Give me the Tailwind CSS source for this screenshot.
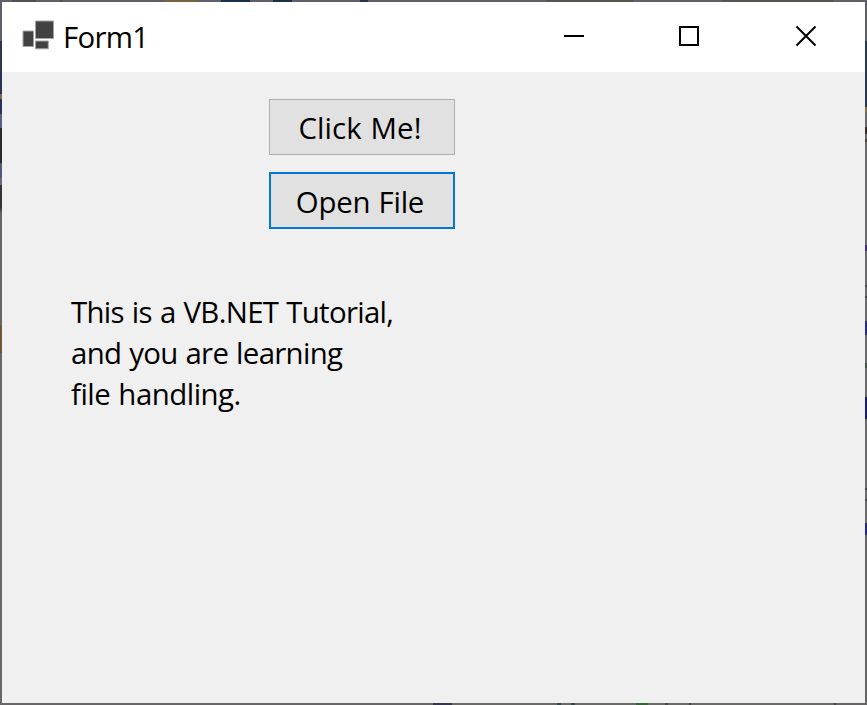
<!DOCTYPE html>
<html lang="en">
<head>
<meta charset="utf-8">
<title>Form1</title>
<script src="https://cdn.jsdelivr.net/npm/@tailwindcss/browser@4"></script>
</head>
<body class="w-[867px] h-[705px] overflow-hidden text-black font-['Open_Sans',sans-serif] text-[29.4px]">
<div class="grid grid-cols-[2px_863px_2px] grid-rows-[2px_701px_2px] w-[867px] h-[705px]">
  <div class="col-span-3 bg-[linear-gradient(90deg,#5f5f69_12px,#4d5153_12px_36px,#5f5f69_36px_60px,#505057_60px_62px,#5f5f69_62px_165px,#79613f_165px_198px,#5f5f69_198px_221px,#19304d_221px_250px,#5f5f69_250px_273px,#19304d_273px_292px,#5f5f69_292px_360px,#24354d_360px_368px,#5f5f69_368px_547px,#57554f_547px_633px,#5f5f69_633px_723px,#57554f_723px_833px,#5f5f69_833px)]"></div>
  <div class="bg-[linear-gradient(180deg,#5f5f69_39px,#2a3450_39px_92px,#80644a_92px_97px,#24325c_97px_112px,#5a607c_112px_126px,#292929_126px_161px,#505876_161px_176px,#6a6a70_176px_183px,#343436_183px_205px,#666_212px_323px,#6f5638_323px_351px,#686868_351px)]"></div>
  <main class="flex flex-col bg-[#f0f0f0]">
    <header class="flex h-[70px] shrink-0 bg-white">
      <div class="flex flex-1 items-start pl-5 pt-[17px]">
        <svg class="w-[34px] h-[32px]" viewBox="0 0 34 32" fill="#424242" stroke="#a4a4a4" stroke-width="1"><path d="M13.5 2h18v17.5h-18zM1 12h10.5v15.5H1zM13.5 22h12.8v7.8h-12.8z"/></svg>
        <h1 class="ml-[7px] -mt-[2px] leading-[40px] tracking-[-0.7px] whitespace-nowrap">Form1</h1>
      </div>
      <svg class="w-[350px] h-[70px]" viewBox="513 0 350 70" fill="none" stroke="#000" stroke-width="2"><path shape-rendering="crispEdges" d="M562 34h20M678 25h18v18h-18z"/><path d="M794.5 24.5l19 19m0-19l-19 19"/></svg>
    </header>
    <div class="flex flex-col gap-[17px] pl-[267px] pt-[27px]">
      <button class="flex w-[186px] h-[56px] justify-center border border-[#adadad] bg-[#e1e1e1] pt-[8px] pr-[4px] leading-[40px] tracking-[0.1px] [word-spacing:1px] whitespace-nowrap">Click Me!</button>
      <button class="flex w-[186px] h-[57px] justify-center border-2 border-[#0078d7] bg-[#e1e1e1] pt-[8px] pr-[4px] leading-[40px] tracking-[-0.25px] [word-spacing:1px] whitespace-nowrap">Open File</button>
    </div>
    <div class="flex flex-col items-start pl-[69px] pt-[63px] leading-[41px] whitespace-nowrap">
      <span class="tracking-[-0.68px] [word-spacing:1px]">This is a VB.NET Tutorial,</span>
      <span class="tracking-[-0.7px] [word-spacing:1px]">and you are learning</span>
      <span class="tracking-[-0.5px] [word-spacing:1px]">file handling.</span>
    </div>
  </main>
  <div class="bg-[linear-gradient(180deg,#5f5f69_39px,#2c3650_39px_105px,#80704f_105px_110px,#69696b_110px_125px,#352c27_125px_132px,#69696b_132px_137px,#463c38_137px_140px,#6b6b6e_140px_243px,#403079_243px_249px,#6b6b6e_249px_283px,#444_283px_285px,#6b6b6e_285px_294px,#444_294px_296px,#6b6b6e_296px_319px,#292782_319px_333px,#6b6b6e_333px_361px,#455046_361px_366px,#6b6b6e_366px_395px,#1d1b70_395px_417px,#6b6b6e_417px_486px,#444_486px_488px,#6b6b6e_488px_497px,#444_497px_499px,#6b6b6e_499px_521px,#292782_521px_533px,#666_533px)]"></div>
  <div class="col-span-3 bg-[linear-gradient(90deg,#686666_433px,#363650_433px_452px,#6b6868_452px_557px,#30494d_557px_561px,#6b6868_561px_571px,#30494d_571px_575px,#6b6868_575px_636px,#356438_636px_648px,#6b6868_648px_665px,#4b4848_665px_668px,#6b6868_668px_689px,#464343_689px_691px,#6b6868_691px_834px,#464343_834px_836px,#656363_836px)]"></div>
</div>
</body>
</html>
